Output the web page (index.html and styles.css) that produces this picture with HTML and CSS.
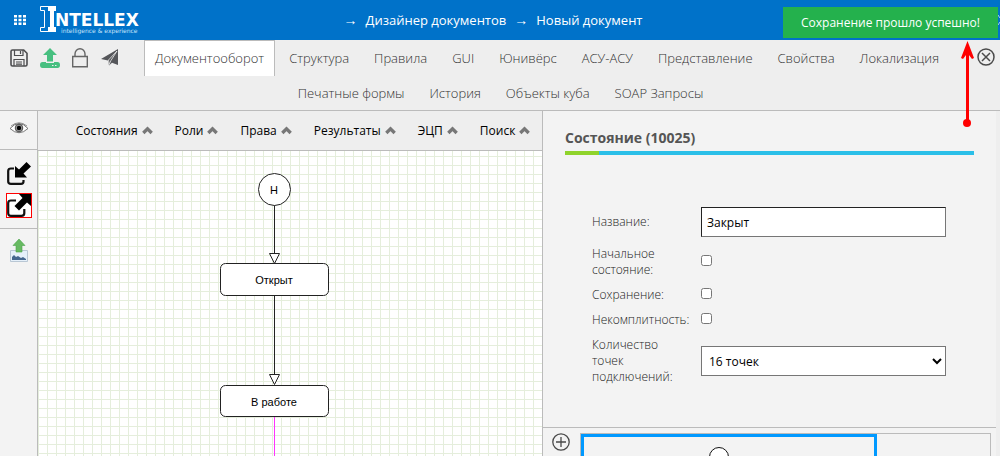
FILE: index.html
```html
<!DOCTYPE html>
<html lang="ru">
<head>
<meta charset="utf-8">
<title>Дизайнер документов</title>
<link rel="stylesheet" href="styles.css">
</head>
<body>
<div class="app">
  <header class="topbar">
    <button class="icon-btn apps" aria-label="Меню">
      <svg width="12" height="10" viewBox="0 0 12 10" fill="#fff"><path d="M0 0h3v2.600H0zM4.500 0h3v2.600h-3zM9 0h3v2.600H9zM0 3.700h3v2.600H0zM4.500 3.700h3v2.600h-3zM9 3.700h3v2.600H9zM0 7.400h3V10H0zM4.500 7.400h3V10h-3zM9 7.400h3V10H9z"/></svg>
    </button>
    <a class="logo" href="#" aria-label="Intellex">
      <svg width="104" height="30" viewBox="0 0 104 30">
        <path d="M8 1h8v5h-2v16h2v5H8v-5h2V6H8z" fill="#fff"/>
        <path d="M8 1.500H.5v4h4v17h-4v4H8" fill="none" stroke="#fff" stroke-width="1"/>
        <text class="logo-name" x="15" y="21">NTELLEX</text>
        <text class="logo-sub" x="21" y="28">intelligence &amp; experience</text>
      </svg>
    </a>
    <nav class="crumbs">
      <span class="arrow">→</span><a href="#">Дизайнер документов</a><span class="arrow">→</span><a href="#">Новый документ</a>
    </nav>
    <svg class="edge-icon" width="2" height="12" viewBox="0 0 2 12" fill="none" stroke="#a9d2f2"><path d="M0 1l2 3M0 11l2-3"/></svg>
  </header>

  <div class="toolbar">
    <div class="tools">
      <button class="icon-btn" aria-label="Сохранить">
        <svg width="18" height="18" viewBox="0 0 18 18" fill="none" stroke="#4d4d4f" stroke-width="1.600"><path d="M2.500 1h11.200L17 4.300v11.200a1.500 1.500 0 0 1-1.500 1.500h-13A1.500 1.500 0 0 1 1 15.500v-13A1.500 1.500 0 0 1 2.500 1z"/><path d="M4.500 1v5.500h8.500V1M10.500 2v3M4 17v-6.500h10V17M6 13h6M6 15.200h6" stroke-width="1.200"/></svg>
      </button>
      <button class="icon-btn" aria-label="Загрузить">
        <svg width="20" height="20" viewBox="0 0 20 20" fill="#47bf80"><path d="M10 0l7 7h-4v6.500H7V7H3z"/><path d="M2.500 14H6v1h8v-1h3.500a2.500 3 0 0 1 0 6h-15a2.500 3 0 0 1 0-6z"/><path d="M12 17.500h1.500M15 17.500h1.500" stroke="#eee" stroke-width="1.200"/></svg>
      </button>
      <button class="icon-btn" aria-label="Заблокировать">
        <svg width="16" height="20" viewBox="0 0 16 20" fill="none" stroke="#666" stroke-width="1.400"><path d="M.7 8.500h14.600v10.300H.7zM3 8.500V6a5 5.300 0 0 1 10 0v2.500"/></svg>
      </button>
      <button class="icon-btn" aria-label="Отправить">
        <svg width="18" height="17" viewBox="-1 0 18 17"><path d="M17 0v16l-6-2.300-3 2.800-1-5L0 10z" fill="#55565a"/><path d="M16 2L7.500 11l.7 4.500 1.500-3.600L16 2" fill="none" stroke="#eee" stroke-width=".8"/></svg>
      </button>
    </div>
    <button class="icon-btn close" aria-label="Закрыть">
      <svg width="18" height="18" viewBox="0 0 18 18" fill="none" stroke="#4a4a4a" stroke-width="1.500"><circle cx="9" cy="9" r="8"/><path d="M5 5l8 8M13 5l-8 8"/></svg>
    </button>
    <nav class="tabs">
      <a class="tab active" href="#">Документооборот</a>
      <a class="tab" href="#">Структура</a>
      <a class="tab" href="#">Правила</a>
      <a class="tab" href="#">GUI</a>
      <a class="tab" href="#">Юнивёрс</a>
      <a class="tab" href="#">АСУ-АСУ</a>
      <a class="tab" href="#">Представление</a>
      <a class="tab" href="#">Свойства</a>
      <a class="tab" href="#">Локализация</a>
      <a class="tab" href="#">Печатные формы</a>
      <a class="tab" href="#">История</a>
      <a class="tab" href="#">Объекты куба</a>
      <a class="tab" href="#">SOAP Запросы</a>
    </nav>
  </div>

  <main class="work">
    <aside class="side">
      <div class="side-group view">
        <button class="icon-btn" aria-label="Просмотр">
          <svg width="20" height="12" viewBox="0 0 20 12"><path d="M1 6.500Q10-3.500 19 6.500 10 15 1 6.500z" fill="#fff" stroke="#555" stroke-width=".8"/><path d="M2 4Q10-2.500 18 4" fill="none" stroke="#777" stroke-width=".8"/><circle cx="10" cy="6" r="3.800" fill="#999" stroke="#333" stroke-width=".8"/><circle cx="10" cy="6" r="2.200" fill="#000"/></svg>
        </button>
      </div>
      <div class="side-group moves">
        <button class="icon-btn mode" aria-label="Свернуть">
          <svg width="24" height="23" viewBox="0 0 24 23"><path d="M7 6.500H4Q1.200 6.500 1.200 9v10.500Q1.200 21.800 4 21.800h10Q16.500 21.800 16.500 19.500V18" fill="none" stroke="#111" stroke-width="2.200"/><path d="M19.500 0L24 4.500 16.500 11.500 20 15.500H8V4l4 3.500z"/></svg>
        </button>
        <button class="icon-btn mode on" aria-label="Развернуть">
          <svg width="24" height="23" viewBox="0 0 24 23"><path d="M9 6.500H4Q1.200 6.500 1.200 9v10.200Q1.200 21.800 4 21.800h10.500q2.800 0 2.800-2.500V15" fill="none" stroke="#111" stroke-width="2.200"/><path d="M12 0h12v12l-4-3.500-8 8L7.500 12l8-8z"/></svg>
        </button>
      </div>
      <div class="side-group export">
        <button class="icon-btn" aria-label="Экспорт изображения">
          <svg width="18" height="23" viewBox="0 0 18 23"><path d="M.5 11.500h17v11H.5z" fill="#e5f0fa" stroke="#b9c7d4"/><path d="M2 21v-3l2-2 2 2 2-1 3 2 2-1 3 2v1z" fill="#45678f"/><path d="M9 0l6 6.500h-3V13H6V6.500H3z" fill="#68ba62" stroke="#4ca64b" stroke-width=".6"/></svg>
        </button>
      </div>
    </aside>

    <section class="designer">
      <div class="menu">
        <button class="menu-item">Состояния<svg class="chev" viewBox="0 0 10 8"><path d="M1.200 6.300L5 2.500l3.800 3.800"/></svg></button>
        <button class="menu-item">Роли<svg class="chev" viewBox="0 0 10 8"><path d="M1.200 6.300L5 2.500l3.800 3.800"/></svg></button>
        <button class="menu-item">Права<svg class="chev" viewBox="0 0 10 8"><path d="M1.200 6.300L5 2.500l3.800 3.800"/></svg></button>
        <button class="menu-item">Результаты<svg class="chev" viewBox="0 0 10 8"><path d="M1.200 6.300L5 2.500l3.800 3.800"/></svg></button>
        <button class="menu-item">ЭЦП<svg class="chev" viewBox="0 0 10 8"><path d="M1.200 6.300L5 2.500l3.800 3.800"/></svg></button>
        <button class="menu-item">Поиск<svg class="chev" viewBox="0 0 10 8"><path d="M1.200 6.300L5 2.500l3.800 3.800"/></svg></button>
      </div>
      <div class="canvas">
        <svg class="diagram" width="504" height="320" viewBox="0 0 504 320">
          <g fill="#fff" stroke="#222">
            <path d="M236.500 54v50M236.500 144v80"/>
            <path d="M231.500 102.500h10l-5 10zM231.500 223.500h10l-5 10z"/>
            <circle cx="236.500" cy="38.500" r="16"/>
            <rect x="182.500" y="112.500" width="108" height="32" rx="5"/>
            <rect x="182.500" y="234.500" width="108" height="31" rx="5"/>
          </g>
          <path d="M236.500 266v54" stroke="#f3f"/>
          <g class="node-text">
            <text x="236" y="43">Н</text>
            <text x="236" y="133">Открыт</text>
            <text x="236" y="255">В работе</text>
          </g>
        </svg>
      </div>
    </section>

    <section class="panel">
      <div class="props">
        <h2 class="title">Состояние (10025)</h2>
        <form class="form">
          <label for="name">Название:</label>
          <input class="field" id="name" type="text" value="Закрыт">
          <label for="initial">Начальное состояние:</label>
          <input class="check" id="initial" type="checkbox">
          <label for="saving">Сохранение:</label>
          <input class="check" id="saving" type="checkbox">
          <label for="incomplete">Некомплитность:</label>
          <input class="check" id="incomplete" type="checkbox">
          <label for="points">Количество точек подключений:</label>
          <select class="field" id="points"><option>16 точек</option></select>
        </form>
      </div>
      <div class="preview">
        <button class="icon-btn add" aria-label="Добавить">
          <svg width="18" height="18" viewBox="0 0 18 18" fill="none" stroke="#4a4a4a" stroke-width="1.300"><circle cx="9" cy="9" r="8.200"/><path d="M9 4v10M4 9h10"/></svg>
        </button>
        <div class="preview-box">
          <div class="shape">
            <svg width="20" height="20" viewBox="0 0 20 20"><circle cx="10" cy="10" r="9.500" fill="#fff" stroke="#111"/></svg>
          </div>
        </div>
      </div>
    </section>
  </main>

  <div class="toast" role="status">Сохранение прошло успешно!</div>
  <svg class="pointer" width="16" height="88" viewBox="0 0 16 88"><path d="M8.500 6v76" stroke="red" stroke-width="3"/><circle cx="8" cy="82" r="4" fill="red"/><path d="M8.500 0l6.500 17-2 1-4.500-6-4.500 6-2-1z" fill="red"/></svg>
</div>
</body>
</html>
```
FILE: styles.css
```css
* { box-sizing: border-box; }

body {
  margin: 0;
  font-family: "Open Sans", "Noto Sans", sans-serif;
  font-size: 12px;
  color: #555;
  background: #eee;
}

a { color: inherit; text-decoration: none; }

.app {
  position: relative;
  display: flex;
  flex-direction: column;
  height: 100vh;
  overflow: hidden;
}

.icon-btn {
  display: flex;
  padding: 0;
  border: 0;
  background: none;
  cursor: pointer;
}

/* Header */
.topbar {
  display: flex;
  align-items: center;
  flex: none;
  height: 40px;
  padding-left: 14px;
  background: #0072c9;
  color: #fff;
}
.logo { display: flex; margin-left: 14px; }
.logo-name { font: bold 17px "DejaVu Sans", sans-serif; fill: #fff; }
.logo-sub { font: 6px "DejaVu Sans", sans-serif; fill: #c4e2f9; }
.crumbs {
  display: flex;
  flex: 1;
  align-items: center;
  justify-content: center;
  gap: 8px;
  margin-right: 156px;
  font-size: 13px;
  font-weight: 500;
}
.arrow { font: 14px/20px "Liberation Sans", Arial, sans-serif; }
.edge-icon { flex: none; }

/* Tabs row */
.toolbar {
  flex: none;
  border-bottom: 1px solid #bbb;
}
.tools {
  display: flex;
  float: left;
  align-items: center;
  gap: 12px;
  height: 35px;
  padding-left: 10px;
}
.close { float: right; padding: 8px 5px 0 0; }
.tabs {
  padding-left: 2px;
  text-align: center;
  font-size: 0;
}
.tab {
  display: inline-block;
  height: 36px;
  margin: 0 2px -1px 1px;
  padding: 0 10px;
  border: 1px solid transparent;
  border-bottom: 0;
  font-size: 13px;
  font-weight: 300;
  line-height: 35px;
  color: #333;
}
.tab.active { border-color: #bbb; background: #fff; }

/* Work area */
.work { display: flex; flex: 1; min-height: 0; }
.side {
  flex: none;
  width: 38px;
  border-right: 1px solid #bbb;
  background: #f3f3f3;
}
.side-group {
  display: flex;
  flex-direction: column;
  align-items: center;
  border-bottom: 1px solid #bbb;
}
.side-group.export { border-bottom: 0; padding-top: 10px; }
.view { height: 39px; padding-top: 11px; }
.moves { height: 79px; padding-top: 11px; gap: 7px; }
.mode { border: 1px solid transparent; }
.mode.on { border-color: red; background: #fff; }

.designer {
  display: flex;
  flex: 1;
  flex-direction: column;
  min-width: 0;
}
.menu {
  display: flex;
  flex: none;
  align-items: center;
  justify-content: center;
  gap: 22px;
  height: 40px;
  padding-left: 26px;
  border-bottom: 1px solid #bbb;
}
.menu-item {
  display: flex;
  align-items: center;
  gap: 4px;
  padding: 0;
  border: 0;
  background: none;
  font: 12px "Open Sans", "Noto Sans", sans-serif;
  color: #000;
}
.chev {
  width: 11px;
  height: 9px;
  fill: none;
  stroke: #777;
  stroke-width: 3;
}
.canvas {
  flex: 1;
  min-height: 0;
  overflow: hidden;
  background-color: #fff;
  background-image:
    linear-gradient(to right, #e5eedc 1px, transparent 1px),
    linear-gradient(#e5eedc 1px, transparent 1px);
  background-size: 9px 9px;
  background-position: 0 5px;
}
.diagram { display: block; }
.node-text {
  font: 11px "Liberation Sans", Arial, sans-serif;
  text-anchor: middle;
  fill: #000;
}

/* Properties */
.panel {
  display: flex;
  flex: none;
  flex-direction: column;
  width: 458px;
  border-left: 1px solid #bbb;
  border-right: 4px solid #eee;
  background: #f3f3f3;
}
.props {
  flex: 1;
  padding: 17px 22px 0;
  border-bottom: 1px solid #bbb;
}
.title {
  margin: 0;
  padding-bottom: 7px;
  background: linear-gradient(to right, #8fd32b 34px, #2bbfe8 34px) bottom / 100% 4px no-repeat;
  font-size: 14px;
  line-height: 20px;
  color: #555;
}
.form {
  display: grid;
  grid-template-columns: 100px 1fr;
  gap: 9px;
  align-items: center;
  padding: 52px 28px 0 27px;
  font-weight: 300;
  line-height: 16px;
  color: #222;
}
.field {
  width: 100%;
  height: 30px;
  padding: 0 5px;
  border: 1px solid #767676;
  border-radius: 0;
  background: #fff;
  font: 12px "Open Sans", "Noto Sans", sans-serif;
  color: #000;
}
input.field { border-top-color: #222; border-left-color: #222; }
select.field { padding: 0 3px; }
.check { width: 11px; height: 11px; margin: 0 0 4px; }

.preview {
  display: flex;
  flex: none;
  height: 28px;
  padding: 5px 5px 0 9px;
  gap: 10px;
  overflow: hidden;
}
.add { height: 18px; }
.preview-box {
  flex: 1;
  border: 1px solid #bbb;
  border-bottom: 0;
}
.shape {
  display: flex;
  justify-content: center;
  width: 296px;
  height: 80px;
  padding-top: 10px;
  padding-right: 20px;
  border: 3px solid #09f;
}

/* Overlays */
.toast {
  position: absolute;
  top: 7px;
  right: 2px;
  padding: 0 18px;
  background: #24b14d;
  color: #fff;
  font-size: 12px;
  line-height: 31px;
}
.pointer { position: absolute; top: 41px; right: 25px; }
```
